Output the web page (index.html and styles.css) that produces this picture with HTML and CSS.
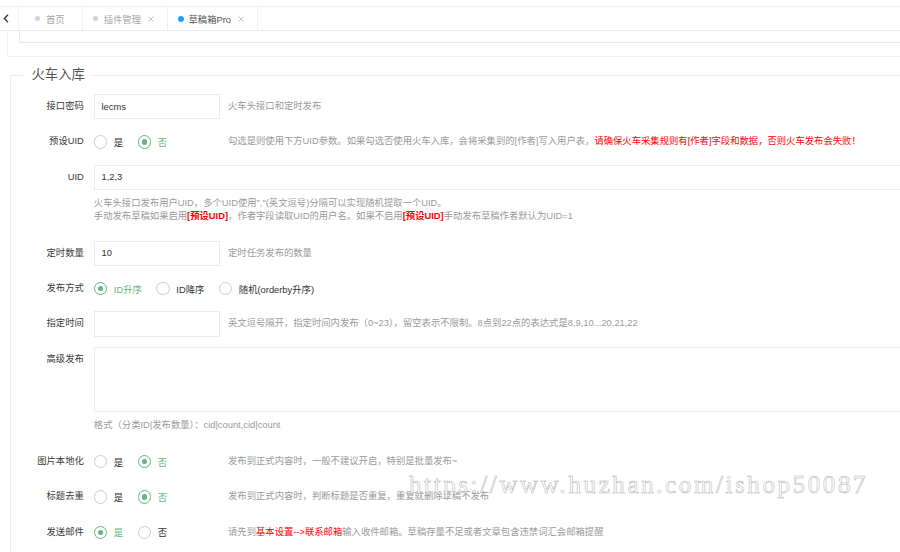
FILE: index.html
```html
<!DOCTYPE html>
<html lang="zh-CN">
<head>
<meta charset="utf-8">
<title>草稿箱Pro</title>
<link rel="stylesheet" href="styles.css">
</head>
<body>
<div class="page">
  <div class="tabbar">
    <div class="tab-back">
      <svg width="6" height="9" viewBox="0 0 6 9"><path d="M5 0.8 L1.3 4.5 L5 8.2" fill="none" stroke="#333" stroke-width="1.3"/></svg>
    </div>
    <div class="tab tab-home"><span class="dot"></span>首页</div>
    <div class="tab"><span class="dot"></span>插件管理<span class="close"><svg width="6" height="6" viewBox="0 0 6 6"><path d="M0.5 0.5 L5.5 5.5 M5.5 0.5 L0.5 5.5" stroke="#bbb" stroke-width="0.9"/></svg></span></div>
    <div class="tab tab-active"><span class="dot"></span>草稿箱Pro<span class="close"><svg width="6" height="6" viewBox="0 0 6 6"><path d="M0.5 0.5 L5.5 5.5 M5.5 0.5 L0.5 5.5" stroke="#bbb" stroke-width="0.9"/></svg></span></div>
  </div>

  <div class="prev-outer"><div class="prev-inner"></div></div>

  <fieldset class="field">
    <legend>火车入库</legend>
    <div class="field-box">

      <div class="row">
        <label class="label">接口密码</label>
        <div class="inline"><input class="input" type="text" value="lecms"></div>
        <div class="aux">火车头接口和定时发布</div>
      </div>

      <div class="row">
        <label class="label">预设UID</label>
        <div class="inline radios">
          <span class="radio"><i></i>是</span>
          <span class="radio on"><i></i>否</span>
        </div>
        <div class="aux">勾选是则使用下方UID参数。如果勾选否使用火车入库，会将采集到的[作者]写入用户表，<span class="red">请确保火车采集规则有[作者]字段和数据，否则火车发布会失败！</span></div>
      </div>

      <div class="row">
        <label class="label">UID</label>
        <div class="block">
          <input class="input" type="text" value="1,2,3">
          <div class="block-aux">火车头接口发布用户UID，多个UID使用","(英文逗号)分隔可以实现随机提取一个UID。<br>手动发布草稿如果启用<b class="red">[预设UID]</b>，作者字段读取UID的用户名。如果不启用<b class="red">[预设UID]</b>手动发布草稿作者默认为UID=1</div>
        </div>
      </div>

      <div class="row">
        <label class="label">定时数量</label>
        <div class="inline"><input class="input" type="text" value="10"></div>
        <div class="aux">定时任务发布的数量</div>
      </div>

      <div class="row">
        <label class="label">发布方式</label>
        <div class="radios">
          <span class="radio on"><i></i>ID升序</span>
          <span class="radio"><i></i>ID降序</span>
          <span class="radio"><i></i>随机(orderby升序)</span>
        </div>
      </div>

      <div class="row">
        <label class="label">指定时间</label>
        <div class="inline"><input class="input" type="text" value=""></div>
        <div class="aux">英文逗号隔开，指定时间内发布（0~23），留空表示不限制。8点到22点的表达式是8,9,10...20,21,22</div>
      </div>

      <div class="row">
        <label class="label">高级发布</label>
        <div class="block">
          <textarea class="textarea"></textarea>
          <div class="block-aux">格式（分类ID|发布数量）：cid|count,cid|count</div>
        </div>
      </div>

      <div class="row">
        <label class="label">图片本地化</label>
        <div class="inline radios">
          <span class="radio"><i></i>是</span>
          <span class="radio on"><i></i>否</span>
        </div>
        <div class="aux">发布到正式内容时，一般不建议开启，特别是批量发布~</div>
      </div>

      <div class="row">
        <label class="label">标题去重</label>
        <div class="inline radios">
          <span class="radio"><i></i>是</span>
          <span class="radio on"><i></i>否</span>
        </div>
        <div class="aux">发布到正式内容时，判断标题是否重复，重复就删除草稿不发布</div>
      </div>

      <div class="row">
        <label class="label">发送邮件</label>
        <div class="inline radios">
          <span class="radio on"><i></i>是</span>
          <span class="radio"><i></i>否</span>
        </div>
        <div class="aux">请先到<span class="red">基本设置--&gt;联系邮箱</span>输入收件邮箱。草稿存量不足或者文章包含违禁词汇会邮箱提醒</div>
      </div>

    </div>
  </fieldset>
</div>
<div class="watermark">https://www.huzhan.com/ishop50087</div>
</body>
</html>
```

FILE: styles.css
```css
html, body {
  margin: 0;
  padding: 0;
  background: #fff;
  overflow: hidden;
}
body {
  width: 900px;
  height: 552px;
  position: relative;
  font-family: "Liberation Sans", "Noto Sans CJK SC", sans-serif;
  font-size: 9.33px;
  color: #333;
}
.page {
  width: 980px;
}

/* tab bar */
.tabbar {
  margin-top: 6px;
  height: 23px;
  border-top: 1px solid #f0f0f0;
  border-bottom: 1px solid #ebebeb;
  display: flex;
  align-items: stretch;
}
.tab-back {
  width: 19px;
  border-right: 1px solid #f0f0f0;
  display: flex;
  align-items: center;
  padding-left: 3px;
  box-sizing: border-box;
}
.tab {
  display: flex;
  align-items: center;
  padding: 0 13px 0 10px;
  border-right: 1px solid #f0f0f0;
  color: #a6a6a6;
  white-space: nowrap;
}
.tab-home {
  padding: 0 17px 0 16px;
}
.tab .dot {
  width: 5px;
  height: 5px;
  border-radius: 50%;
  background: #d2d2d2;
  margin-right: 6px;
}
.tab-active {
  color: #555;
}
.tab-active .dot {
  background: #1e9fff;
  width: 6px;
  height: 6px;
  margin-right: 4px;
}
.tab .close {
  display: flex;
  margin-left: 7.5px;
}

/* remnants of previous card */
.prev-outer {
  margin-left: 7px;
  height: 25px;
  border-left: 1px solid #f0f0f0;
  border-bottom: 1px solid #f0f0f0;
}
.prev-inner {
  margin-left: 11px;
  height: 11px;
  border-left: 1px solid #ebebeb;
  border-bottom: 1px solid #e6e6e6;
}

/* fieldset */
.field {
  margin: 8px 0 0 9.5px;
  padding: 0 0 0 10px;
  border: 1px solid #ebebeb;
  border-right: none;
  border-bottom: none;
}
.field legend {
  margin-left: 4px;
  padding: 0 7px;
  font-size: 13.33px;
  line-height: 20px;
  color: #555;
}
.field-box {
  padding-top: 9px;
}

.row {
  display: flex;
  align-items: flex-start;
  margin-bottom: 10px;
}
.label {
  flex: none;
  width: 73.33px;
  box-sizing: border-box;
  padding-right: 10px;
  text-align: right;
  line-height: 25.33px;
  color: #3a3a3a;
  white-space: nowrap;
}
.inline {
  flex: none;
  width: 126.67px;
}
.block {
  flex: 1;
  min-width: 0;
}
.aux {
  margin-left: 7.5px;
  line-height: 25.33px;
  color: #9a9a9a;
  white-space: nowrap;
}
.block-aux {
  padding: 7px 0;
  line-height: 13.33px;
  color: #9a9a9a;
  white-space: nowrap;
}
.red {
  color: #f00;
}
b.red {
  font-weight: bold;
}

.input {
  display: block;
  width: 100%;
  height: 25.33px;
  box-sizing: border-box;
  border: 1px solid #ebebeb;
  padding: 0 6.67px;
  margin: 0;
  font-family: inherit;
  font-size: 9.33px;
  color: #333;
  background: #fff;
  outline: none;
}
.textarea {
  display: block;
  width: 100%;
  height: 65px;
  box-sizing: border-box;
  border: 1px solid #ebebeb;
  margin: 0;
  padding: 6px;
  resize: none;
  font-family: inherit;
  background: #fff;
}

/* radios */
.radios {
  display: flex;
  align-items: center;
  height: 25.33px;
  white-space: nowrap;
}
.radio {
  display: inline-flex;
  align-items: center;
  margin-right: 14.5px;
  color: #333;
}
.radio i {
  width: 13.5px;
  height: 13.5px;
  box-sizing: border-box;
  border: 1px solid #cccccc;
  border-radius: 50%;
  margin-right: 6.5px;
  display: flex;
  align-items: center;
  justify-content: center;
}
.radio.on {
  color: #5fb878;
}
.radio.on i {
  border-color: #5fb878;
}
.radio.on i::after {
  content: "";
  width: 5.5px;
  height: 5.5px;
  border-radius: 50%;
  background: #5fb878;
}

/* watermark overlay */
.watermark {
  position: absolute;
  left: 409px;
  top: 472px;
  font-family: "Liberation Serif", serif;
  font-size: 25px;
  line-height: 25px;
  letter-spacing: 2.6px;
  color: #fff;
  -webkit-text-stroke: 0.5px #b0b0b0;
  white-space: nowrap;
  pointer-events: none;
}
```
